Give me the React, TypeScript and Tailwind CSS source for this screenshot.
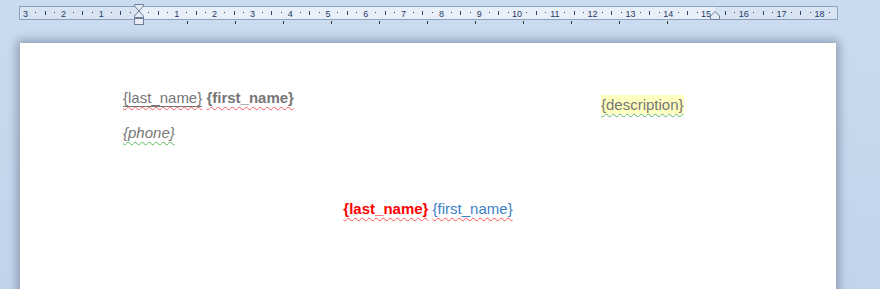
import React from "react";

const U = 37.8;
const ZERO = 139;

function Ruler() {
  const labels: { x: number; t: string }[] = [];
  for (let n = -3; n <= 18; n++) {
    if (n === 0) continue;
    labels.push({ x: ZERO + n * U, t: String(Math.abs(n)) });
  }
  const dots: number[] = [];
  const lines: number[] = [];
  for (let n = -4; n <= 19; n++) {
    const b = ZERO + n * U;
    dots.push(b + U * 0.25, b + U * 0.75);
    lines.push(b + U * 0.5);
  }
  const tabs: number[] = [];
  for (let k = 1; k <= 11; k++) tabs.push(ZERO + 48 * k);
  return (
    <svg width="880" height="26" className="block">
      <defs>
        <clipPath id="rc">
          <rect x="20" y="7" width="817" height="12" />
        </clipPath>
      </defs>
      <rect x="19.5" y="6.5" width="818" height="13" fill="#d9e4f2" stroke="#8da2bf" />
      <rect x="139" y="7" width="576" height="12" fill="#e8eff8" />
      <g clipPath="url(#rc)">
        {dots.map((x, i) => (
          <rect key={"d" + i} x={Math.round(x)} y={12} width={1} height={1} fill="#30466a" />
        ))}
        {lines.map((x, i) => (
          <rect key={"l" + i} x={Math.round(x)} y={11} width={1} height={4} fill="#30466a" />
        ))}
        {labels.map((l, i) => (
          <text
            key={"t" + i}
            x={l.x}
            y={17}
            textAnchor="middle"
            fontFamily="'Liberation Sans', Arial, sans-serif"
            fontSize="9"
            fill="#1d3a67"
          >
            {l.t}
          </text>
        ))}
      </g>
      {tabs.map((x, i) => (
        <rect key={"tb" + i} x={Math.round(x)} y={21} width={1} height={3} fill="#3a3a3a" />
      ))}
      {/* hourglass indent marker */}
      <path d="M134.5 4.5 H143.5 V6 L139 11 L134.5 6 Z" fill="#e9edf3" stroke="#6b7d98" />
      <path d="M139 11 L143.5 16 V17.5 H134.5 V16 Z" fill="#e9edf3" stroke="#6b7d98" />
      <rect x="134.5" y="18.5" width="9" height="6" fill="#e9edf3" stroke="#6b7d98" />
      {/* right indent */}
      <path d="M710.5 19.5 V16 L715 11.5 L719.5 16 V19.5 Z" fill="#e9edf3" stroke="#6b7d98" />
    </svg>
  );
}

const font = { fontFamily: "'Liberation Sans', Arial, sans-serif" };

export default function App() {
  return (
    <div className="w-[880px] h-[289px] overflow-hidden bg-gradient-to-b from-[#cbdcf0] to-[#c2d4ea]" style={font}>
      <Ruler />
      <div className="pt-[17px] pl-[20px]">
        <div className="w-[816px] h-[260px] bg-white shadow-[0_0_9px_3px_rgba(70,85,110,0.45)]">
          <div className="flex pl-[103px] pt-[46px] text-[15px] leading-[17px] text-[#767676]">
            <div className="w-[478px] flex flex-col gap-[18px]">
              <div className="whitespace-nowrap">
                <span className="border-b border-[#767676] underline decoration-wavy decoration-[#f06060] decoration-1 underline-offset-[3px]">{"{last_name}"}</span>{" "}
                <span className="font-bold underline decoration-wavy decoration-[#f06060] decoration-1 underline-offset-[3px]">{"{first_name}"}</span>
              </div>
              <div className="italic whitespace-nowrap">
                <span className="underline decoration-wavy decoration-[#5cb85c] decoration-1 underline-offset-[3px]">{"{phone}"}</span>
              </div>
            </div>
            <div className="pt-[7px]">
              <span className="bg-[#ffffc0] py-[1px] underline decoration-wavy decoration-[#5cb85c] decoration-1 underline-offset-[3px] whitespace-nowrap">{"{description}"}</span>
            </div>
          </div>
          <div className="mt-[59px] flex justify-center text-[15px] leading-[17px]">
            <span className="whitespace-nowrap">
              <span className="font-bold text-[#ff0000] underline decoration-wavy decoration-[#ff5050] decoration-1 underline-offset-[3px]">{"{last_name}"}</span>{" "}
              <span className="text-[#3a7fc4] underline decoration-wavy decoration-[#ff5050] decoration-1 underline-offset-[3px]">{"{first_name}"}</span>
            </span>
          </div>
        </div>
      </div>
    </div>
  );
}
